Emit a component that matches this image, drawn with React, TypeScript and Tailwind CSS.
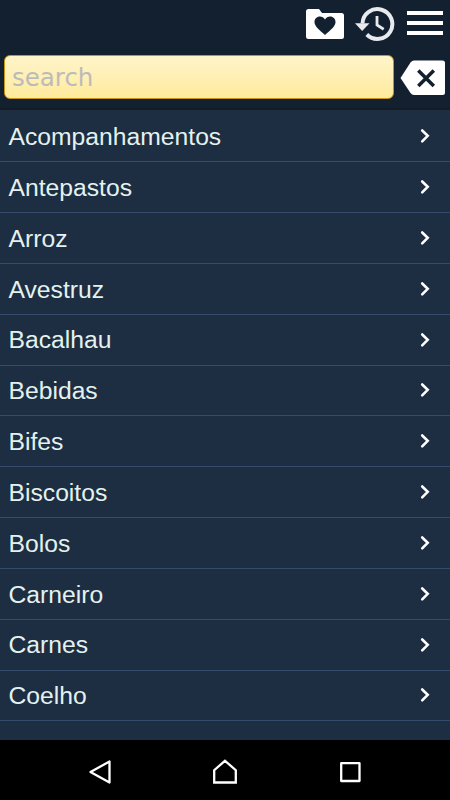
import React, { useState } from 'react';

const categories = [
    'Acompanhamentos',
    'Antepastos',
    'Arroz',
    'Avestruz',
    'Bacalhau',
    'Bebidas',
    'Bifes',
    'Biscoitos',
    'Bolos',
    'Carneiro',
    'Carnes',
    'Coelho',
];

const FavoritesIcon = () => (
    <svg width="38" height="30" viewBox="0 0 38 30">
        <path d="M2.500 0H13l3 4h19.500a2.500 2.500 0 0 1 2.500 2.500v21a2.500 2.500 0 0 1-2.500 2.500h-33A2.500 2.500 0 0 1 0 27.500v-25A2.500 2.500 0 0 1 2.500 0Z" fill="#fff" />
        <path d="M19 26C14 21.500 8.500 17.500 8.500 13c0-3.200 2.400-5.500 5.300-5.500 2.200 0 4.100 1 5.200 3 1.100-2 3-3 5.200-3 2.900 0 5.300 2.300 5.300 5.500 0 4.500-5.500 8.500-10.500 13Z" fill="#132030" />
    </svg>
);

const HistoryIcon = () => (
    <svg width="40" height="36" viewBox="0 0 40 36" fill="none" stroke="#e8eaee">
        <path d="M7.500 17.500A14.900 14.900 0 1 1 11.800 28.500" strokeWidth="4" />
        <path d="M0 17.300h14.500L7.200 25Z" fill="#e8eaee" stroke="none" />
        <path d="M22 10v9l6.700 4.200" strokeWidth="2.800" />
    </svg>
);

const ClearIcon = () => (
    <svg width="46" height="36" viewBox="0 0 46 36">
        <path d="M.5 18 10.500 2.500Q12 .5 14 .5h28.500a2.500 2.500 0 0 1 2.500 2.500v29.500a2.500 2.500 0 0 1-2.500 2.500H14q-2 0-3.500-2Z" fill="#fff" />
        <path d="m18.300 10.500 15.500 15.500m0-15.500-15.500 15.500" stroke="#132030" strokeWidth="3.500" />
    </svg>
);

const CategoryRow = ({ name }: { name: string }) => (
    <li className="h-[50.83px] border-b border-[#364b6b] pl-[8.500px] pr-5 flex items-center justify-between">
        <span className="text-[24.700px] leading-none text-[#e3f2ef] pt-[2.400px]">{name}</span>
        <svg width="10" height="16" viewBox="0 0 10 16" fill="none" stroke="#fff" strokeWidth="2.600" strokeLinecap="round">
            <path d="m2.200 2.500 5.500 5.300-5.500 5.600" />
        </svg>
    </li>
);

export default function App() {
    const [query, setQuery] = useState('');

    return (
        <div className="w-full h-[800px] overflow-hidden flex flex-col bg-[#1d2d42] font-['Liberation_Sans',sans-serif]">
            <header className="h-[110px] shrink-0 bg-[#132030] border-b-2 border-[#151b23]">
                <div className="h-[55px] flex items-start justify-end pr-[7px] pt-[6px]">
                    <button className="mt-[3px] mr-[11px]"><FavoritesIcon /></button>
                    <button className="mr-3"><HistoryIcon /></button>
                    <button className="w-9 mt-[5px] flex flex-col gap-[6px]">
                        <span className="h-1 bg-white" />
                        <span className="h-1 bg-white" />
                        <span className="h-1 bg-white" />
                    </button>
                </div>
                <div className="flex items-center pl-1 pr-1 gap-[6px]">
                    <input
                        type="text"
                        placeholder="search"
                        className="w-[390px] h-[44px] rounded-[6px] border border-[#c99418] bg-linear-to-b from-[#fff4cb] to-[#ffeb9b] pl-[7px] text-[24.500px] text-gray-800 placeholder-[#bbbbbb] font-['DejaVu_Sans',sans-serif] focus:outline-none"
                        value={query}
                        onChange={(e) => setQuery(e.target.value)}
                    />
                    <button className="pt-px" onClick={() => setQuery('')}><ClearIcon /></button>
                </div>
            </header>

            <ul className="flex-1 min-h-0 overflow-hidden pt-[1.400px]">
                {categories.map((name) => (
                    <CategoryRow key={name} name={name} />
                ))}
            </ul>

            <nav className="h-[60px] shrink-0 bg-black flex items-center justify-between pl-[88px] pr-[88px] pt-1">
                <svg width="24" height="26" viewBox="0 0 24 26" fill="none" stroke="#fff" strokeWidth="2.300" strokeLinejoin="round">
                    <path d="M2.500 13 21.500 2.500v21Z" />
                </svg>
                <svg width="26" height="26" viewBox="0 0 26 26" fill="none" stroke="#fff" strokeWidth="2.300">
                    <path d="m13 1.800 10.800 9.400v12.300H2.200V11.200Z" />
                </svg>
                <svg width="24" height="26" viewBox="0 0 24 26" fill="none" stroke="#fff" strokeWidth="2.300" strokeLinejoin="round">
                    <path d="M3.200 4.200h18.300v17.800H3.200Z" />
                </svg>
            </nav>
        </div>
    );
}
